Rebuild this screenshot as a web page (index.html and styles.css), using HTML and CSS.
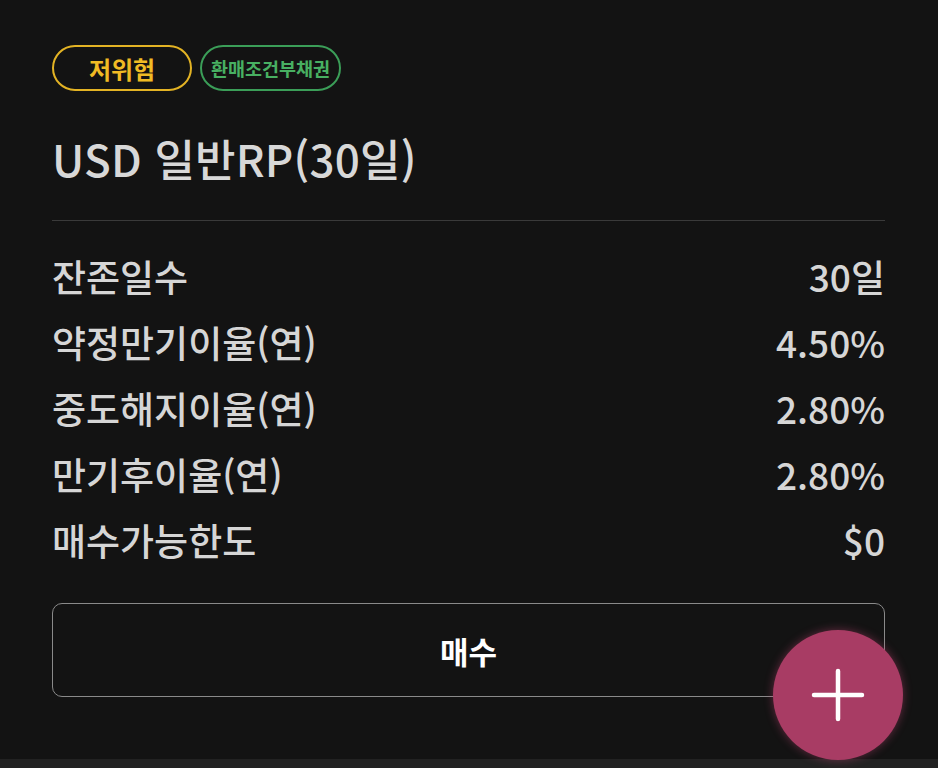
FILE: index.html
```html
<!DOCTYPE html>
<html lang="ko">
<head>
<meta charset="utf-8">
<link rel="stylesheet" href="styles.css">
</head>
<body>
<main class="card">
  <div class="badges">
    <span class="badge badge-risk">저위험</span>
    <span class="badge badge-type">환매조건부채권</span>
  </div>
  <h1 class="title">USD 일반RP(30일)</h1>
  <hr class="divider">
  <dl class="rows">
    <div class="row"><dt>잔존일수</dt><dd>30일</dd></div>
    <div class="row"><dt>약정만기이율(연)</dt><dd>4.50%</dd></div>
    <div class="row"><dt>중도해지이율(연)</dt><dd>2.80%</dd></div>
    <div class="row"><dt>만기후이율(연)</dt><dd>2.80%</dd></div>
    <div class="row"><dt>매수가능한도</dt><dd>$0</dd></div>
  </dl>
  <button class="buy">매수</button>
</main>
<div class="bottom-strip"></div>
<button class="fab" aria-label="추가">
  <svg width="56" height="56" viewBox="0 0 56 56"><path d="M28 4v48M4 28h48" stroke="#fff" stroke-width="4.5" stroke-linecap="round"/></svg>
</button>
</body>
</html>
```
FILE: styles.css
```css
html, body {
  margin: 0;
  padding: 0;
  background: #131313;
  font-family: "Noto Sans CJK KR", "Noto Sans", sans-serif;
  color: #d6d6d6;
  height: 768px;
  overflow: hidden;
}
.card {
  padding: 45px 53px 0 52px;
}
.badges {
  display: flex;
  gap: 8px;
  height: 46px;
}
.badge {
  box-sizing: border-box;
  height: 46px;
  border-radius: 23px;
  border: 2px solid;
  display: flex;
  align-items: center;
  justify-content: center;
  font-weight: 700;
}
.badge-risk {
  width: 140px;
  border-color: #e3b324;
  color: #f0bb24;
  font-size: 24px;
}
.badge-type {
  width: 141px;
  border-color: #3b9e58;
  color: #48b062;
  font-size: 18.5px;
}
.title {
  margin: 40px 0 0;
  font-size: 44px;
  font-weight: 500;
  line-height: 54px;
  color: #d8d8d8;
  letter-spacing: 0.2px;
}
.divider {
  margin: 35px 0 0;
  border: 0;
  height: 1px;
  background: #3a3a3a;
}
.rows {
  margin: 22px 0 0;
}
.row {
  display: flex;
  justify-content: space-between;
  align-items: center;
  height: 66px;
  font-size: 37px;
  font-weight: 500;
  color: #d6d6d6;
}
.row dt, .row dd {
  margin: 0;
}
.buy {
  display: block;
  box-sizing: border-box;
  width: 100%;
  height: 94px;
  margin-top: 30px;
  background: transparent;
  border: 1.5px solid #8a8a8a;
  border-radius: 10px;
  color: #ffffff;
  font-family: inherit;
  font-size: 31px;
  font-weight: 700;
}
.bottom-strip {
  margin-top: 62px;
  height: 20px;
  background: #222222;
}
.fab {
  position: absolute;
  left: 773px;
  top: 630px;
  width: 130px;
  height: 130px;
  border-radius: 50%;
  border: 0;
  background: #a83c64;
  display: flex;
  align-items: center;
  justify-content: center;
  box-shadow: 0 0 10px rgba(200, 70, 120, 0.45);
  padding: 0;
}
```
